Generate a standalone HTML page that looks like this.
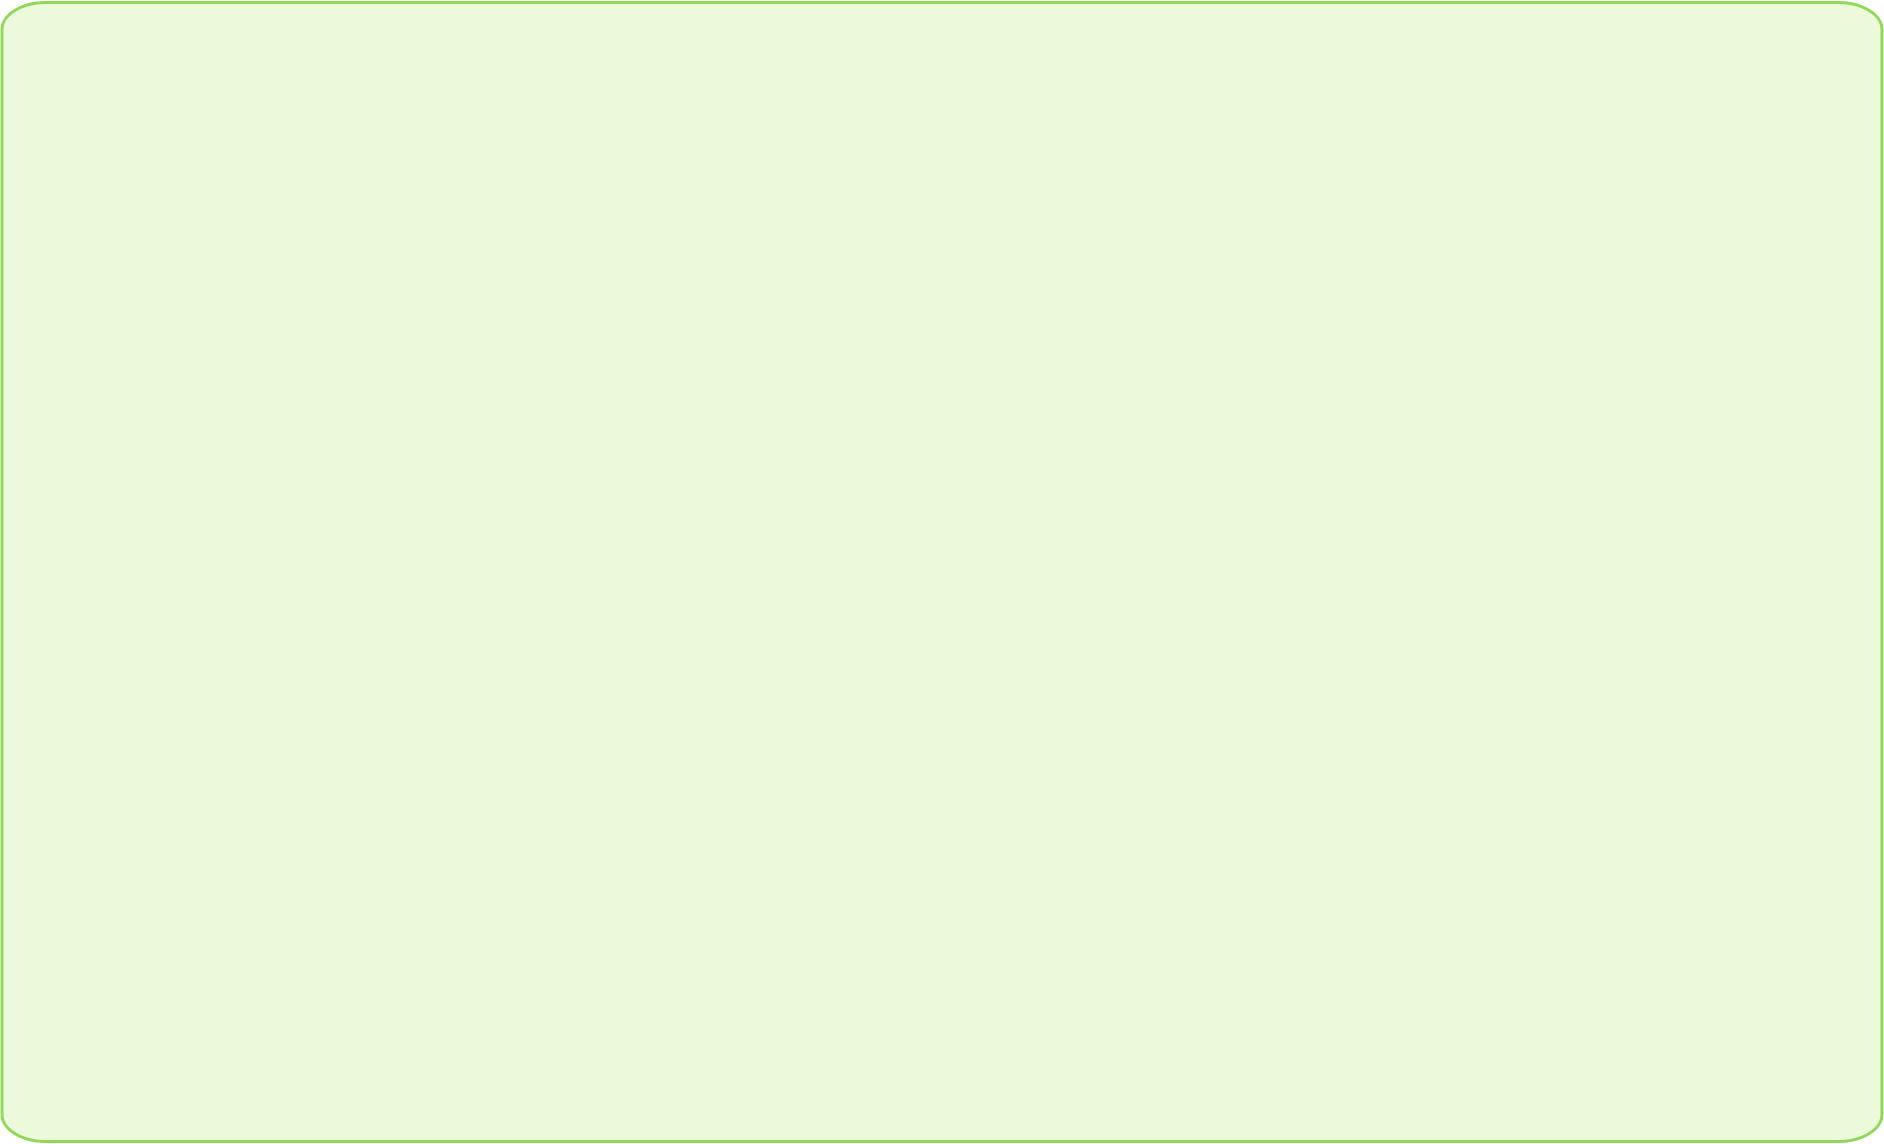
<!DOCTYPE html>
<html><head><meta charset="utf-8"><style>html,body{margin:0;padding:0;width:1884px;height:1144px;background:#fff;overflow:hidden}</style></head>
<body>
<svg width="1884" height="1144" viewBox="0 0 1884 1144" xmlns="http://www.w3.org/2000/svg" style="display:block">
<path d="M46 2.5 H1838 A44 27 0 0 1 1882 29.5 V1114.5 A44 27 0 0 1 1838 1141.5 H46 A44 27 0 0 1 2 1114.5 V29.5 A44 27 0 0 1 46 2.5 Z" fill="#edf9db" stroke="#92d65a" stroke-width="3"/>
</svg>
</body></html>
